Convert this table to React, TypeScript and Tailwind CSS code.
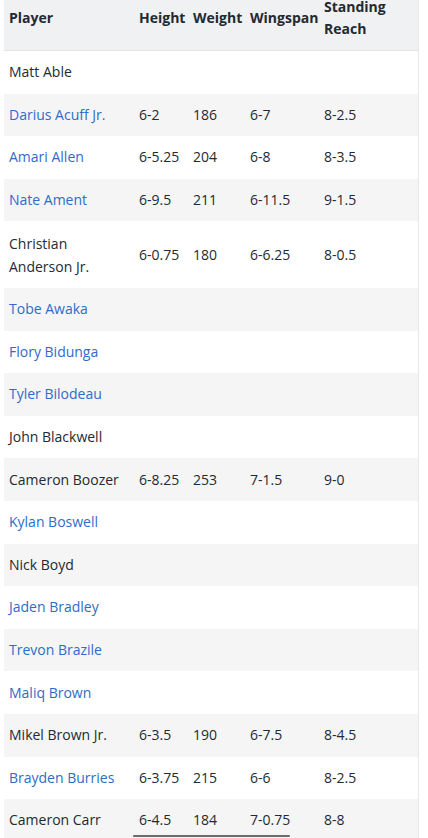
const players = [
  { name: "Matt Able", link: false },
  { name: "Darius Acuff Jr.", link: true, h: "6-2", w: "186", ws: "6-7", sr: "8-2.5" },
  { name: "Amari Allen", link: true, h: "6-5.25", w: "204", ws: "6-8", sr: "8-3.5" },
  { name: "Nate Ament", link: true, h: "6-9.5", w: "211", ws: "6-11.5", sr: "9-1.5" },
  { name: "Christian Anderson Jr.", link: false, h: "6-0.75", w: "180", ws: "6-6.25", sr: "8-0.5" },
  { name: "Tobe Awaka", link: true },
  { name: "Flory Bidunga", link: true },
  { name: "Tyler Bilodeau", link: true },
  { name: "John Blackwell", link: false },
  { name: "Cameron Boozer", link: false, h: "6-8.25", w: "253", ws: "7-1.5", sr: "9-0" },
  { name: "Kylan Boswell", link: true },
  { name: "Nick Boyd", link: false },
  { name: "Jaden Bradley", link: true },
  { name: "Trevon Brazile", link: true },
  { name: "Maliq Brown", link: true },
  { name: "Mikel Brown Jr.", link: false, h: "6-3.5", w: "190", ws: "6-7.5", sr: "8-4.5" },
  { name: "Brayden Burries", link: true, h: "6-3.75", w: "215", ws: "6-6", sr: "8-2.5" },
  { name: "Cameron Carr", link: false, h: "6-4.5", w: "184", ws: "7-0.75", sr: "8-8" },
];

export default function App() {
  return (
    <div
      className="relative h-[838px] overflow-hidden bg-white text-[14px] leading-[22px] text-[#232a31]"
      style={{ fontFamily: '"Open Sans", "Noto Sans", sans-serif' }}
    >
      <div className="-mt-[14px] ml-[4px] w-[415px] border-r border-[#e8e8e8]">
        <table className="w-full table-fixed border-collapse text-left">
          <colgroup>
            <col className="w-[129px]" />
            <col className="w-[54px]" />
            <col className="w-[57px]" />
            <col className="w-[74px]" />
            <col />
          </colgroup>
          <thead>
            <tr className="border-b border-[#e2e4e6] bg-[#f0f1f2] font-semibold">
              <th className="px-[5px] py-[10px] align-middle">Player</th>
              <th className="px-[6px] py-[10px] align-middle">Height</th>
              <th className="px-[6px] py-[10px] align-middle">Weight</th>
              <th className="whitespace-nowrap px-[6px] py-[10px] align-middle">Wingspan</th>
              <th className="px-[6px] py-[10px] align-middle">
                Standing
                <br />
                Reach
              </th>
            </tr>
          </thead>
          <tbody>
            {players.map((p, i) => (
              <tr key={p.name} className={i % 2 === 0 ? "bg-white" : "bg-[#f5f5f5]"}>
                <td className="px-[5px] py-[10.3px] align-middle">
                  {p.name === "Christian Anderson Jr." ? (
                    <span className="block leading-[23px]">
                      Christian
                      <br />
                      Anderson Jr.
                    </span>
                  ) : p.link ? (
                    <a href="#" className="whitespace-nowrap text-[#2f6bc8]">
                      {p.name}
                    </a>
                  ) : (
                    <span className="whitespace-nowrap">{p.name}</span>
                  )}
                </td>
                <td className="px-[6px] py-[10.3px] align-middle">{p.h}</td>
                <td className="px-[6px] py-[10.3px] align-middle">{p.w}</td>
                <td className="px-[6px] py-[10.3px] align-middle">{p.ws}</td>
                <td className="px-[6px] py-[10.3px] align-middle">{p.sr}</td>
              </tr>
            ))}
          </tbody>
        </table>
      </div>
      <div className="absolute bottom-[1px] left-[133px] h-[2px] w-[157px] rounded-full bg-[#6b6b6b]" />
    </div>
  );
}
